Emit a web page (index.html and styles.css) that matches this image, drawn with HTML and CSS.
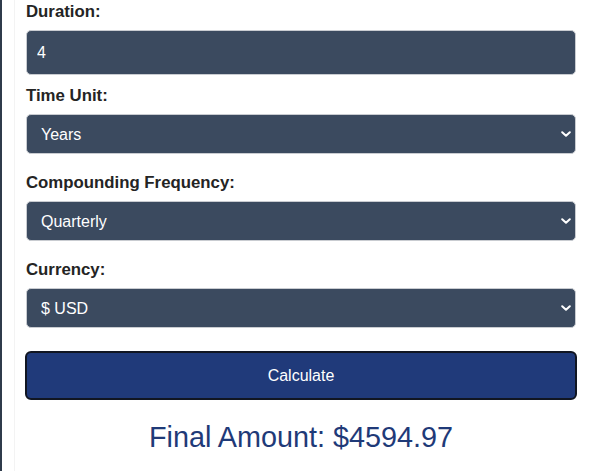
FILE: index.html
```html
<!DOCTYPE html>
<html lang="en">
<head>
<meta charset="utf-8">
<title>Compound Interest Calculator</title>
<link rel="stylesheet" href="styles.css">
</head>
<body>
<div class="page">
  <div class="card">
    <div class="field field-input">
      <label class="label" for="duration">Duration:</label>
      <input class="control text-control" id="duration" type="text" value="4">
    </div>
    <div class="field">
      <label class="label" for="unit">Time Unit:</label>
      <div class="select-wrap">
        <select class="control select-control" id="unit">
          <option>Years</option>
          <option>Months</option>
        </select>
        <svg class="chevron" viewBox="0 0 10 6" width="10" height="6" aria-hidden="true"><path d="M1.2 1.2 L5 4.8 L8.8 1.2" fill="none" stroke="#ffffff" stroke-width="2" stroke-linecap="round" stroke-linejoin="round"/></svg>
      </div>
    </div>
    <div class="field">
      <label class="label" for="freq">Compounding Frequency:</label>
      <div class="select-wrap">
        <select class="control select-control" id="freq">
          <option>Quarterly</option>
          <option>Monthly</option>
          <option>Annually</option>
        </select>
        <svg class="chevron" viewBox="0 0 10 6" width="10" height="6" aria-hidden="true"><path d="M1.2 1.2 L5 4.8 L8.8 1.2" fill="none" stroke="#ffffff" stroke-width="2" stroke-linecap="round" stroke-linejoin="round"/></svg>
      </div>
    </div>
    <div class="field field-last">
      <label class="label" for="currency">Currency:</label>
      <div class="select-wrap">
        <select class="control select-control" id="currency">
          <option>$ USD</option>
          <option>€ EUR</option>
        </select>
        <svg class="chevron" viewBox="0 0 10 6" width="10" height="6" aria-hidden="true"><path d="M1.2 1.2 L5 4.8 L8.8 1.2" fill="none" stroke="#ffffff" stroke-width="2" stroke-linecap="round" stroke-linejoin="round"/></svg>
      </div>
    </div>
    <button class="calc-btn" type="button">Calculate</button>
    <div class="result">Final Amount: $4594.97</div>
  </div>
</div>
</body>
</html>
```

FILE: styles.css
```css
html, body {
  margin: 0;
  padding: 0;
  background: #ffffff;
  font-family: "Liberation Sans", Arial, sans-serif;
}

.page {
  border-left: 2px solid #2f3b4b;
  min-height: 100vh;
  box-sizing: border-box;
  padding-left: 12px;
}

.card {
  border-left: 1px solid #f3f3f3;
  min-height: 100vh;
  box-sizing: border-box;
  padding: 2px 24px 0 11px;
}

.field {
  display: flex;
  flex-direction: column;
  margin-bottom: 19px;
}

.field-input {
  margin-bottom: 11px;
}

.field-last {
  margin-bottom: 0;
}

.label {
  font-size: 16.8px;
  font-weight: bold;
  color: #242424;
  margin-bottom: 8px;
}

.control {
  box-sizing: border-box;
  width: 100%;
  margin: 0;
  background: #3b4a5f;
  color: #ffffff;
  border: 1px solid #c9ccd1;
  border-radius: 5px;
  font-family: "Liberation Sans", Arial, sans-serif;
  font-size: 16px;
  outline: none;
}

.text-control {
  height: 45px;
  padding: 0 10px;
}

.select-wrap {
  position: relative;
}

.select-control {
  -webkit-appearance: none;
  appearance: none;
  height: 40px;
  padding: 0 30px 0 14px;
}

.chevron {
  position: absolute;
  right: 5px;
  top: 50%;
  width: 10px;
  height: 6px;
  margin-top: -3px;
  pointer-events: none;
}

.calc-btn {
  display: block;
  box-sizing: border-box;
  width: calc(100% + 2px);
  margin: 23px -1px 0;
  height: 49px;
  background: #203a7a;
  color: #ffffff;
  border: 2px solid #111622;
  border-radius: 6px;
  font-family: "Liberation Sans", Arial, sans-serif;
  font-size: 16px;
  cursor: pointer;
}

.result {
  margin-top: 21px;
  text-align: center;
  font-size: 28.8px;
  color: #1f3a78;
}
```
